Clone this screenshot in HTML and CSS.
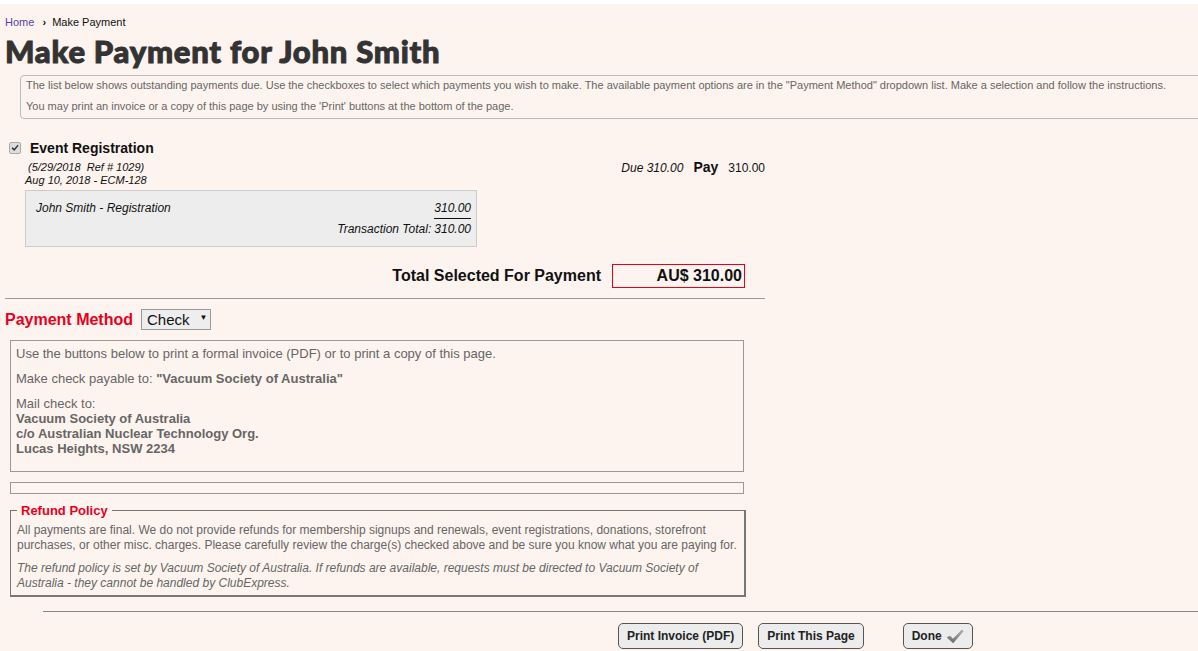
FILE: index.html
```html
<!DOCTYPE html>
<html lang="en">

<head>
    <meta charset="UTF-8">
    <meta name="viewport" content="width=device-width, initial-scale=1.0">
    <title>Make Payment</title>
<link rel="stylesheet" href="styles.css">
</head>

<body>
    <div class="topbar"></div>
    <div class="page">
        <!-- breadcrumb -->
        <div class="crumbs">
            <a href="#" class="crumb-link">Home</a>
            <span class="crumb-sep">&#8250;</span>
            <span>Make Payment</span>
        </div>
        <h1 class="title">Make Payment for John Smith</h1>

        <div class="intro">
            <p>The list below shows outstanding payments due. Use the checkboxes to select which payments you wish to make. The available payment options are in the "Payment Method" dropdown list. Make a selection and follow the instructions.</p>
            <p>You may print an invoice or a copy of this page by using the 'Print' buttons at the bottom of the page.</p>
        </div>

        <div class="main">
            <!-- payment item -->
            <div class="item">
                <div class="item-head">
                    <span class="item-check">
                        <svg width="8" height="8" viewBox="0 0 8 8">
                            <path d="M0.5 4.3 L1.7 3.2 L3.2 4.8 L6.6 0.8 L7.6 1.8 L3.2 7 Z" fill="#333"/>
                        </svg>
                    </span>
                    <span class="item-name">Event Registration</span>
                </div>
                <div class="item-row">
                    <div class="item-meta">
                        <div class="meta-ref">(5/29/2018&nbsp; Ref # 1029)</div>
                        <div>Aug 10, 2018 - ECM-128</div>
                    </div>
                    <div class="item-due">
                        <span class="due">Due 310.00</span>
                        <span class="pay">Pay</span>
                        <span class="pay-amt">310.00</span>
                    </div>
                </div>
                <div class="detail">
                    <div class="detail-row">
                        <span>John Smith - Registration</span>
                        <span class="amt-line">310.00</span>
                    </div>
                    <div class="detail-total">
                        <span>Transaction Total:</span>
                        <span class="amt-total">310.00</span>
                    </div>
                </div>
            </div>

            <div class="total">
                <span class="total-label">Total Selected For Payment</span>
                <span class="total-box">AU$ 310.00</span>
            </div>

            <hr class="rule">

            <div class="method">
                <span class="method-label">Payment Method</span>
                <span class="method-select">Check <span class="caret">&#9660;</span></span>
            </div>

            <div class="instructions">
                <p>Use the buttons below to print a formal invoice (PDF) or to print a copy of this page.</p>
                <p>Make check payable to: <b>"Vacuum Society of Australia"</b></p>
                <p>Mail check to:<br>
                    <b>Vacuum Society of Australia<br>
                    c/o Australian Nuclear Technology Org.<br>
                    Lucas Heights, NSW 2234</b></p>
            </div>

            <div class="empty-box"></div>

            <fieldset class="refund">
                <legend class="refund-title">Refund Policy</legend>
                <p>All payments are final. We do not provide refunds for membership signups and renewals, event registrations, donations, storefront purchases, or other misc. charges. Please carefully review the charge(s) checked above and be sure you know what you are paying for.</p>
                <p class="refund-note">The refund policy is set by Vacuum Society of Australia. If refunds are available, requests must be directed to Vacuum Society of Australia - they cannot be handled by ClubExpress.</p>
            </fieldset>
        </div>

        <div class="bottom">
            <button type="button" class="btn">Print Invoice (PDF)</button>
            <button type="button" class="btn">Print This Page</button>
            <button type="button" class="btn btn-done">Done
                <svg width="18" height="15" viewBox="0 0 18 15">
                    <defs>
                        <linearGradient id="chk" x1="0" y1="0" x2="0" y2="1">
                            <stop offset="0" stop-color="#bbb"/>
                            <stop offset="1" stop-color="#666"/>
                        </linearGradient>
                    </defs>
                    <path d="M1 8.5 L4 7 L7 10 L16 1 L17 2.2 L7.2 14 Z" fill="url(#chk)" stroke="#777" stroke-width="0.5"/>
                </svg>
            </button>
        </div>
    </div>
</body>

</html>
```

FILE: styles.css
```css
* {
    margin: 0;
    padding: 0;
    box-sizing: border-box;
}

body {
    font-family: "Liberation Sans", Arial, sans-serif;
    background-color: #fdf4ef;
    color: #111;
    overflow: hidden;
}

.topbar {
    height: 4px;
    background: #fff;
}

.page {
    padding-left: 5px;
}

.crumbs {
    font-size: 11px;
    padding-top: 12px;
    height: 29px;
    color: #111;
}

.crumb-link {
    color: #5b3fa6;
    text-decoration: none;
}

.crumb-sep {
    font-weight: bold;
    margin: 0 3px 0 5px;
}

.title {
    font-family: Lato, "Liberation Sans", sans-serif;
    font-weight: 900;
    font-size: 31px;
    color: #333;
    -webkit-text-stroke: 1px #333;
    line-height: 36px;
    height: 42px;
    letter-spacing: 0.75px;
}

.intro {
    margin-left: 15px;
    margin-right: -20px;
    border: 1px solid #bbb;
    border-radius: 4px 0 0 4px;
    padding: 3px 5px 2px;
    font-size: 11px;
    color: #666;
    height: 44px;
}

.intro p {
    line-height: 13px;
    margin-bottom: 8px;
}

.main {
    width: 760px;
}

.item {
    padding-top: 21px;
}

.item-head {
    display: flex;
    align-items: center;
    height: 16px;
}

.item-check {
    width: 12px;
    height: 12px;
    margin: 0 9px 0 4px;
    border: 1px solid #aaa;
    border-radius: 2px;
    background: #ddd;
    display: inline-flex;
    align-items: center;
    justify-content: center;
}

.item-name {
    font-size: 14px;
    font-weight: bold;
}

.item-row {
    display: flex;
    justify-content: space-between;
    align-items: flex-start;
    margin-top: 4px;
}

.item-meta {
    font-size: 11px;
    font-style: italic;
    line-height: 13px;
    padding-left: 20px;
    padding-top: 1px;
}

.meta-ref {
    padding-left: 3px;
}

.item-due {
    font-size: 12px;
    display: flex;
    align-items: baseline;
    line-height: 14px;
}

.due {
    font-style: italic;
}

.pay {
    font-size: 14px;
    font-weight: bold;
    margin: 0 10px;
}

.detail {
    margin: 3px 0 0 20px;
    width: 452px;
    height: 57px;
    background: #ededed;
    border: 1px solid #ccc;
    font-size: 12px;
    font-style: italic;
    padding: 10px 5px 0 10px;
}

.detail-row {
    display: flex;
    justify-content: space-between;
    line-height: 14px;
}

.amt-line {
    border-bottom: 1px solid #111;
    padding-bottom: 3px;
}

.detail-total {
    display: flex;
    justify-content: flex-end;
    gap: 3px;
    line-height: 14px;
    margin-top: 3px;
}

.total {
    display: flex;
    justify-content: flex-end;
    align-items: center;
    margin-top: 17px;
    padding-right: 20px;
}

.total-label {
    font-size: 16px;
    font-weight: bold;
    margin-right: 11px;
}

.total-box {
    width: 133px;
    height: 24px;
    border: 1px solid #e8001c;
    font-size: 16px;
    font-weight: bold;
    text-align: right;
    line-height: 22px;
    padding-right: 2px;
}

.rule {
    border: none;
    border-top: 1px solid #999;
    margin-top: 10px;
}

.method {
    display: flex;
    align-items: center;
    margin-top: 10px;
}

.method-label {
    color: #e8001c;
    font-size: 16px;
    font-weight: bold;
    margin-right: 8px;
}

.method-select {
    display: inline-flex;
    align-items: center;
    height: 21px;
    width: 70px;
    border: 1px solid #999;
    background: #eee;
    font-size: 15px;
    padding-left: 5px;
}

.caret {
    font-size: 8px;
    margin-left: 10px;
    margin-top: -5px;
}

.instructions {
    margin: 10px 0 0 5px;
    width: 734px;
    height: 132px;
    border: 1px solid #999;
    font-size: 13px;
    color: #666;
    padding: 5px 5px 0 5px;
}

.instructions p {
    line-height: 15px;
    margin-bottom: 10px;
}

.empty-box {
    margin: 10px 0 0 5px;
    width: 734px;
    height: 12px;
    border: 1px solid #999;
}

.refund {
    margin: 9px 0 0 5px;
    width: 736px;
    height: 94px;
    border-color: #777;
    border-style: solid;
    border-width: 1px 2px 2px 1px;
    padding: 5px 6px 0;
    font-size: 12px;
    color: #666;
}

.refund-title {
    color: #e8001c;
    font-size: 13px;
    font-weight: bold;
    padding: 0 4px;
    margin-left: 0;
}

.refund p {
    line-height: 15px;
    margin-bottom: 8px;
}

.refund-note {
    font-style: italic;
    line-height: 14px;
}

.bottom {
    margin: 14px 0 0 38px;
    border-top: 1px solid #888;
    padding: 11px 0 0 575px;
    display: flex;
    gap: 15px;
}

.btn {
    font-family: "Liberation Sans", Arial, sans-serif;
    font-size: 12px;
    font-weight: bold;
    color: #222;
    background: #ececec;
    border: 1px solid #555;
    border-radius: 5px;
    height: 26px;
    padding: 0 8px;
    display: inline-flex;
    align-items: center;
    gap: 4px;
}

.btn-done {
    margin-left: 24px;
}
```
